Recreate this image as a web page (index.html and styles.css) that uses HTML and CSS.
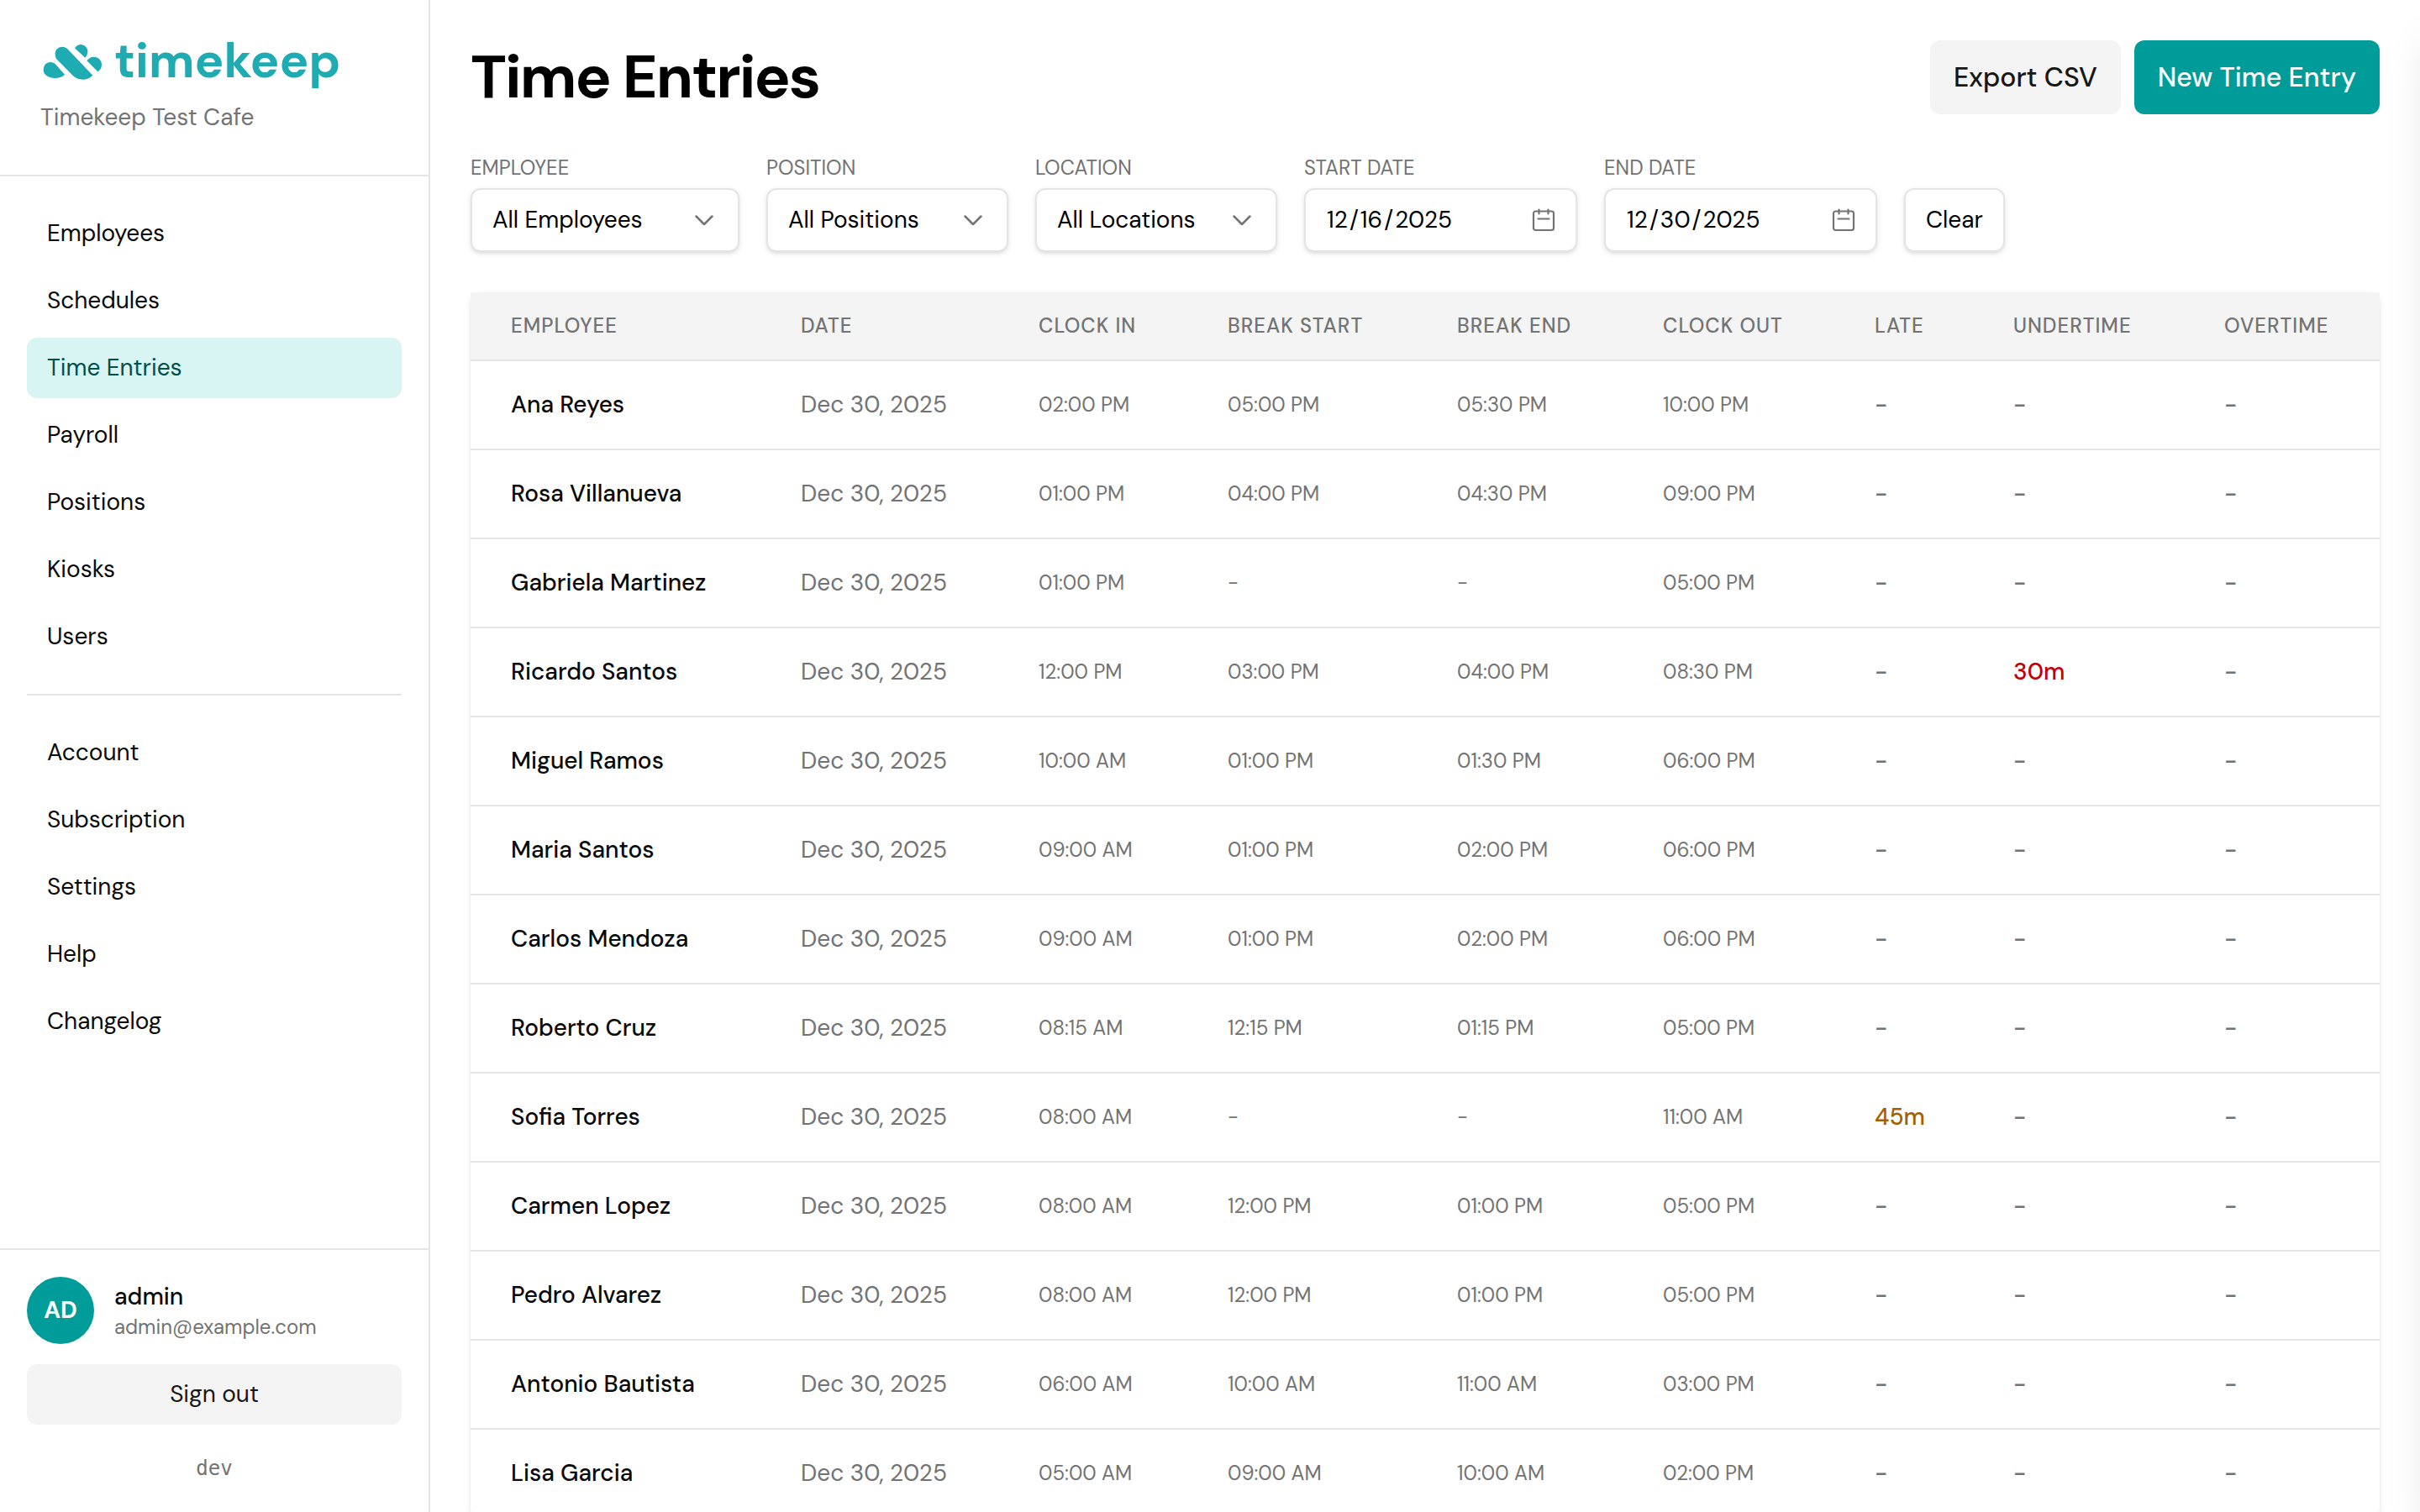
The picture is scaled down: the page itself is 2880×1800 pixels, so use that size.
FILE: index.html
```html
<!DOCTYPE html>
<html lang="en-US">
<head>
<meta charset="utf-8">
<meta name="viewport" content="width=device-width, initial-scale=1">
<title>Time Entries - Timekeep</title>
<link rel="stylesheet" href="styles.css">
</head>
<body>
<div class="layout">
  <aside class="sidebar">
    <header class="brand">
      <a class="logo" href="#">
        <svg class="logo-mark" viewBox="24 24 228 144" aria-hidden="true">
          <path d="M35 130C35 113 45 102 60 102C68 102 74 105 79 110L111 146C103 155 91 159 76 159C53 159 35 147 35 130Z"/>
          <path d="M77 74C77 58 87 47 102 47C110 47 116 50 121 55L211 149C201 159 189 164 175 164C161 164 149 159 141 151L84 93C79 88 77 82 77 74Z"/>
          <path d="M147 52C152 44 160 39 168 39C182 39 193 50 193 64C193 73 189 81 184 86Z"/>
          <path d="M190 97C196 88 204 83 215 83C231 83 243 95 243 111C243 121 238 130 229 136Z"/>
        </svg>
        <span>timekeep</span>
      </a>
      <p class="org">Timekeep Test Cafe</p>
    </header>
    <nav class="nav" aria-label="Main">
      <ul class="nav-list">
        <li><a class="nav-link" href="#">Employees</a></li>
        <li><a class="nav-link" href="#">Schedules</a></li>
        <li><a class="nav-link is-active" href="#" aria-current="page">Time Entries</a></li>
        <li><a class="nav-link" href="#">Payroll</a></li>
        <li><a class="nav-link" href="#">Positions</a></li>
        <li><a class="nav-link" href="#">Kiosks</a></li>
        <li><a class="nav-link" href="#">Users</a></li>
      </ul>
      <hr class="nav-divider">
      <ul class="nav-list">
        <li><a class="nav-link" href="#">Account</a></li>
        <li><a class="nav-link" href="#">Subscription</a></li>
        <li><a class="nav-link" href="#">Settings</a></li>
        <li><a class="nav-link" href="#">Help</a></li>
        <li><a class="nav-link" href="#">Changelog</a></li>
      </ul>
    </nav>
    <footer class="account">
      <div class="user">
        <span class="avatar">AD</span>
        <div class="user-text">
          <p class="user-name">admin</p>
          <p class="user-email">admin@example.com</p>
        </div>
      </div>
      <button class="sign-out" type="button">Sign out</button>
      <p class="version">dev</p>
    </footer>
  </aside>

  <main class="main">
    <header class="page-header">
      <h1 class="page-title">Time Entries</h1>
      <div class="actions">
        <button class="btn btn-secondary" type="button">Export CSV</button>
        <button class="btn btn-primary" type="button">New Time Entry</button>
      </div>
    </header>

    <form class="filters">
      <div class="field">
        <label class="field-label" for="employee">Employee</label>
        <select class="control select select-wide" id="employee"><option>All Employees</option></select>
      </div>
      <div class="field">
        <label class="field-label" for="position">Position</label>
        <select class="control select" id="position"><option>All Positions</option></select>
      </div>
      <div class="field">
        <label class="field-label" for="location">Location</label>
        <select class="control select" id="location"><option>All Locations</option></select>
      </div>
      <div class="field">
        <label class="field-label" for="start">Start date</label>
        <input class="control date" id="start" type="date" value="2025-12-16">
      </div>
      <div class="field">
        <label class="field-label" for="end">End date</label>
        <input class="control date" id="end" type="date" value="2025-12-30">
      </div>
      <button class="control clear" type="button">Clear</button>
    </form>

    <div class="card">
      <table class="entries">
        <colgroup>
          <col class="col-employee"><col class="col-date"><col class="col-in"><col class="col-break-start"><col class="col-break-end"><col class="col-out"><col class="col-late"><col class="col-under"><col class="col-over">
        </colgroup>
        <thead>
          <tr><th scope="col">Employee</th><th scope="col">Date</th><th scope="col">Clock in</th><th scope="col">Break start</th><th scope="col">Break end</th><th scope="col">Clock out</th><th scope="col">Late</th><th scope="col">Undertime</th><th scope="col">Overtime</th></tr>
        </thead>
        <tbody>
          <tr><td class="name">Ana Reyes</td><td>Dec 30, 2025</td><td class="time">02:00 PM</td><td class="time">05:00 PM</td><td class="time">05:30 PM</td><td class="time">10:00 PM</td><td class="delta">-</td><td class="delta">-</td><td class="delta">-</td></tr>
          <tr><td class="name">Rosa Villanueva</td><td>Dec 30, 2025</td><td class="time">01:00 PM</td><td class="time">04:00 PM</td><td class="time">04:30 PM</td><td class="time">09:00 PM</td><td class="delta">-</td><td class="delta">-</td><td class="delta">-</td></tr>
          <tr><td class="name">Gabriela Martinez</td><td>Dec 30, 2025</td><td class="time">01:00 PM</td><td class="time">-</td><td class="time">-</td><td class="time">05:00 PM</td><td class="delta">-</td><td class="delta">-</td><td class="delta">-</td></tr>
          <tr><td class="name">Ricardo Santos</td><td>Dec 30, 2025</td><td class="time">12:00 PM</td><td class="time">03:00 PM</td><td class="time">04:00 PM</td><td class="time">08:30 PM</td><td class="delta">-</td><td class="delta is-under">30m</td><td class="delta">-</td></tr>
          <tr><td class="name">Miguel Ramos</td><td>Dec 30, 2025</td><td class="time">10:00 AM</td><td class="time">01:00 PM</td><td class="time">01:30 PM</td><td class="time">06:00 PM</td><td class="delta">-</td><td class="delta">-</td><td class="delta">-</td></tr>
          <tr><td class="name">Maria Santos</td><td>Dec 30, 2025</td><td class="time">09:00 AM</td><td class="time">01:00 PM</td><td class="time">02:00 PM</td><td class="time">06:00 PM</td><td class="delta">-</td><td class="delta">-</td><td class="delta">-</td></tr>
          <tr><td class="name">Carlos Mendoza</td><td>Dec 30, 2025</td><td class="time">09:00 AM</td><td class="time">01:00 PM</td><td class="time">02:00 PM</td><td class="time">06:00 PM</td><td class="delta">-</td><td class="delta">-</td><td class="delta">-</td></tr>
          <tr><td class="name">Roberto Cruz</td><td>Dec 30, 2025</td><td class="time">08:15 AM</td><td class="time">12:15 PM</td><td class="time">01:15 PM</td><td class="time">05:00 PM</td><td class="delta">-</td><td class="delta">-</td><td class="delta">-</td></tr>
          <tr><td class="name">Sofia Torres</td><td>Dec 30, 2025</td><td class="time">08:00 AM</td><td class="time">-</td><td class="time">-</td><td class="time">11:00 AM</td><td class="delta is-late">45m</td><td class="delta">-</td><td class="delta">-</td></tr>
          <tr><td class="name">Carmen Lopez</td><td>Dec 30, 2025</td><td class="time">08:00 AM</td><td class="time">12:00 PM</td><td class="time">01:00 PM</td><td class="time">05:00 PM</td><td class="delta">-</td><td class="delta">-</td><td class="delta">-</td></tr>
          <tr><td class="name">Pedro Alvarez</td><td>Dec 30, 2025</td><td class="time">08:00 AM</td><td class="time">12:00 PM</td><td class="time">01:00 PM</td><td class="time">05:00 PM</td><td class="delta">-</td><td class="delta">-</td><td class="delta">-</td></tr>
          <tr><td class="name">Antonio Bautista</td><td>Dec 30, 2025</td><td class="time">06:00 AM</td><td class="time">10:00 AM</td><td class="time">11:00 AM</td><td class="time">03:00 PM</td><td class="delta">-</td><td class="delta">-</td><td class="delta">-</td></tr>
          <tr><td class="name">Lisa Garcia</td><td>Dec 30, 2025</td><td class="time">05:00 AM</td><td class="time">09:00 AM</td><td class="time">10:00 AM</td><td class="time">02:00 PM</td><td class="delta">-</td><td class="delta">-</td><td class="delta">-</td></tr>
        </tbody>
      </table>
    </div>
  </main>
</div>
<div class="drawer" aria-hidden="true"></div>
</body>
</html>
```

FILE: styles.css
```css
:root {
  --text: #0a0a0a;
  --muted: #737373;
  --border: #e5e5e5;
  --surface: #f4f4f4;
  --teal: #009c99;
  --radius: 12px;
  --shadow: 0 2px 6px rgba(0, 0, 0, 0.1), 0 2px 4px -2px rgba(0, 0, 0, 0.1);
}

*,
*::before,
*::after {
  box-sizing: border-box;
}

body {
  margin: 0;
  background: #fff;
  color: var(--text);
  font-family: "DM Sans", Inter, "Liberation Sans", sans-serif;
  font-size: 28px;
  line-height: 40px;
  overflow: hidden;
}

p,
h1,
ul {
  margin: 0;
  padding: 0;
}

ul {
  list-style: none;
}

a {
  color: inherit;
  text-decoration: none;
}

button,
input,
select {
  font: inherit;
  color: inherit;
}

.layout {
  display: flex;
  height: 100vh;
}

/* Sidebar */

.sidebar {
  display: flex;
  flex: none;
  flex-direction: column;
  width: 512px;
  border-right: 2px solid var(--border);
}

.brand {
  display: flex;
  flex-direction: column;
  gap: 16px;
  padding: 40px 48px 48px;
  border-bottom: 2px solid var(--border);
}

.logo {
  display: flex;
  align-items: center;
  gap: 12px;
  color: #1fabb2;
  font-size: 58px;
  font-weight: 700;
  line-height: 64px;
}

.logo-mark {
  width: 76px;
  height: 48px;
  fill: currentColor;
}

.org {
  color: var(--muted);
}

.nav {
  flex: 1;
  padding: 32px;
  overflow-y: auto;
}

.nav-list {
  display: flex;
  flex-direction: column;
  gap: 8px;
}

.nav-link {
  display: block;
  padding: 16px 24px;
  border-radius: var(--radius);
}

.nav-link.is-active {
  background: #d9f5f3;
  color: #004f4b;
}

.nav-divider {
  margin: 32px 0;
  border: 0;
  border-top: 2px solid var(--border);
}

.account {
  display: flex;
  flex-direction: column;
  padding: 32px;
  border-top: 2px solid var(--border);
}

.user {
  display: flex;
  align-items: center;
  gap: 24px;
  margin-bottom: 24px;
}

.avatar {
  display: flex;
  align-items: center;
  justify-content: center;
  width: 80px;
  height: 80px;
  border-radius: 50%;
  background: var(--teal);
  color: #fafafa;
  font-weight: 700;
}

.user-text {
  padding-top: 4px;
  line-height: 36px;
}

.user-name {
  font-weight: 500;
}

.user-email {
  color: var(--muted);
  font-size: 24px;
}

.sign-out {
  height: 72px;
  border: 0;
  border-radius: var(--radius);
  background: var(--surface);
  color: #171717;
}

.version {
  margin-top: 32px;
  color: var(--muted);
  font-family: "DejaVu Sans Mono", monospace;
  font-size: 24px;
  text-align: center;
}

/* Main column */

.main {
  flex: 1;
  min-width: 0;
  padding: 48px;
  overflow-y: auto;
  scrollbar-width: none;
}

.page-header {
  display: flex;
  align-items: center;
  justify-content: space-between;
  margin-bottom: 48px;
}

.page-title {
  color: #000;
  font-size: 72px;
  font-weight: 700;
  letter-spacing: -2px;
  line-height: 80px;
}

.actions {
  display: flex;
  gap: 16px;
}

.btn {
  height: 88px;
  padding: 0 28px;
  border: 0;
  border-radius: var(--radius);
  font-size: 32px;
  font-weight: 500;
}

.btn-secondary {
  background: var(--surface);
  color: #171717;
}

.btn-primary {
  background: var(--teal);
  color: #fafafa;
}

/* Filters */

.filters {
  display: flex;
  flex-wrap: wrap;
  align-items: flex-end;
  gap: 32px;
  margin-bottom: 48px;
}

.field {
  display: flex;
  flex-direction: column;
  gap: 8px;
}

.field-label {
  color: var(--muted);
  font-size: 24px;
  line-height: 32px;
  text-transform: uppercase;
}

.control {
  height: 76px;
  padding: 0 24px;
  border: 2px solid var(--border);
  border-radius: var(--radius);
  background-color: #fff;
  box-shadow: var(--shadow);
  color: #000;
}

.select {
  width: 288px;
  appearance: none;
  background-image: url("data:image/svg+xml,%3Csvg xmlns='http://www.w3.org/2000/svg' viewBox='0 0 24 24' fill='none' stroke='%23737373' stroke-width='2.5' stroke-linecap='round' stroke-linejoin='round'%3E%3Cpath d='M2.500 7.500L12 17L21.500 7.500'/%3E%3C/svg%3E");
  background-position: right 28px center;
  background-repeat: no-repeat;
  background-size: 24px 24px;
}

.select-wide {
  width: 320px;
}

.date {
  width: 325px;
}

.date::-webkit-datetime-edit-text {
  padding: 0 1px;
}

.date::-webkit-calendar-picker-indicator {
  width: 28px;
  height: 28px;
  margin: 0;
  padding: 0;
  background: url("data:image/svg+xml,%3Csvg xmlns='http://www.w3.org/2000/svg' viewBox='0 0 28 28' fill='none' stroke='%23737373' stroke-width='2.200' stroke-linecap='round'%3E%3Crect x='2' y='3.500' width='24' height='22.500' rx='2.500'/%3E%3Cpath d='M8.500 1.500v5M19.500 1.500v5M7.500 12.500h13'/%3E%3C/svg%3E") center / 28px 28px no-repeat;
}

/* Entries table */

.card {
  border-radius: var(--radius);
  background: #fff;
  box-shadow: var(--shadow);
}

.entries {
  width: 100%;
  table-layout: fixed;
  border-collapse: separate;
  border-spacing: 0;
}

/* Column widths are proportions of the table; a fixed layout scales them. */
.col-employee { width: 345px; }
.col-date { width: 283px; }
.col-in { width: 225px; }
.col-break-start { width: 273px; }
.col-break-end { width: 245px; }
.col-out { width: 252px; }
.col-late { width: 165px; }
.col-under { width: 251px; }
.col-over { width: 233px; }

.entries th,
.entries td {
  padding: 0 0 0 48px;
  border-bottom: 2px solid var(--border);
  text-align: left;
  white-space: nowrap;
}

.entries th {
  height: 82px;
  background: var(--surface);
  color: var(--muted);
  font-size: 24px;
  font-weight: 500;
  letter-spacing: 1px;
  text-transform: uppercase;
}

.entries td {
  height: 106px;
  color: var(--muted);
}

.entries .name {
  color: var(--text);
  font-weight: 500;
}

.entries .time {
  font-size: 24px;
}

.entries .delta {
  font-weight: 500;
}

.entries .is-under {
  color: #c10007;
}

.entries .is-late {
  color: #a65f00;
}

/* Closed side drawer: it rests past the right edge, its shadow shows. */
.drawer {
  position: fixed;
  top: 0;
  left: 100%;
  width: 640px;
  height: 100vh;
  background: #fff;
  box-shadow: 0 40px 50px -10px rgba(0, 0, 0, 0.1);
}
```
